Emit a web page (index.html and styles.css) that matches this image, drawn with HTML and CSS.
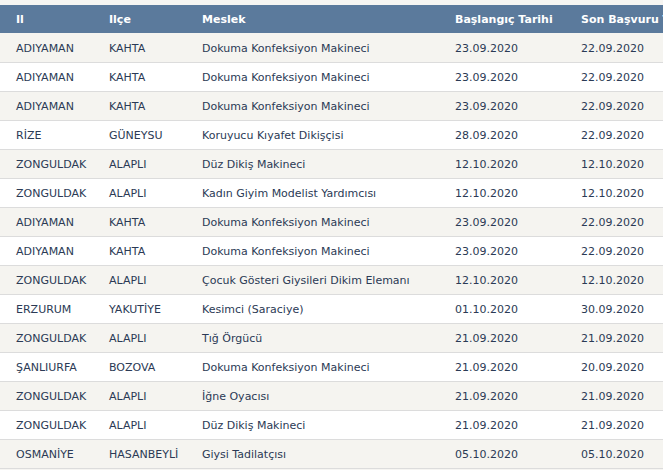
FILE: index.html
```html
<!DOCTYPE html>
<html lang="tr">
<head>
<meta charset="utf-8">
<link rel="stylesheet" href="styles.css">
</head>
<body>
<div class="wrap">
<table class="grid">
<colgroup>
<col class="c-il"><col class="c-ilce"><col class="c-meslek"><col class="c-bas"><col class="c-son">
</colgroup>
<thead>
<tr><th>Il</th><th>Ilçe</th><th>Meslek</th><th>Başlangıç Tarihi</th><th>Son Başvuru Tarihi</th></tr>
</thead>
<tbody>
<tr><td>ADIYAMAN</td><td>KAHTA</td><td>Dokuma Konfeksiyon Makineci</td><td>23.09.2020</td><td>22.09.2020</td></tr>
<tr><td>ADIYAMAN</td><td>KAHTA</td><td>Dokuma Konfeksiyon Makineci</td><td>23.09.2020</td><td>22.09.2020</td></tr>
<tr><td>ADIYAMAN</td><td>KAHTA</td><td>Dokuma Konfeksiyon Makineci</td><td>23.09.2020</td><td>22.09.2020</td></tr>
<tr><td>RİZE</td><td>GÜNEYSU</td><td>Koruyucu Kıyafet Dikişçisi</td><td>28.09.2020</td><td>22.09.2020</td></tr>
<tr><td>ZONGULDAK</td><td>ALAPLI</td><td>Düz Dikiş Makineci</td><td>12.10.2020</td><td>12.10.2020</td></tr>
<tr><td>ZONGULDAK</td><td>ALAPLI</td><td>Kadın Giyim Modelist Yardımcısı</td><td>12.10.2020</td><td>12.10.2020</td></tr>
<tr><td>ADIYAMAN</td><td>KAHTA</td><td>Dokuma Konfeksiyon Makineci</td><td>23.09.2020</td><td>22.09.2020</td></tr>
<tr><td>ADIYAMAN</td><td>KAHTA</td><td>Dokuma Konfeksiyon Makineci</td><td>23.09.2020</td><td>22.09.2020</td></tr>
<tr><td>ZONGULDAK</td><td>ALAPLI</td><td>Çocuk Gösteri Giysileri Dikim Elemanı</td><td>12.10.2020</td><td>12.10.2020</td></tr>
<tr><td>ERZURUM</td><td>YAKUTİYE</td><td>Kesimci (Saraciye)</td><td>01.10.2020</td><td>30.09.2020</td></tr>
<tr><td>ZONGULDAK</td><td>ALAPLI</td><td>Tığ Örgücü</td><td>21.09.2020</td><td>21.09.2020</td></tr>
<tr><td>ŞANLIURFA</td><td>BOZOVA</td><td>Dokuma Konfeksiyon Makineci</td><td>21.09.2020</td><td>20.09.2020</td></tr>
<tr><td>ZONGULDAK</td><td>ALAPLI</td><td>İğne Oyacısı</td><td>21.09.2020</td><td>21.09.2020</td></tr>
<tr><td>ZONGULDAK</td><td>ALAPLI</td><td>Düz Dikiş Makineci</td><td>21.09.2020</td><td>21.09.2020</td></tr>
<tr><td>OSMANİYE</td><td>HASANBEYLİ</td><td>Giysi Tadilatçısı</td><td>05.10.2020</td><td>05.10.2020</td></tr>
</tbody>
</table>
</div>
</body>
</html>
```
FILE: styles.css
```css
html, body {
  margin: 0;
  padding: 0;
  overflow: hidden;
  background: #f6f5f2;
}
.wrap {
  padding-top: 5px;
  width: 760px;
}
.grid {
  border-collapse: collapse;
  width: 760px;
  table-layout: fixed;
  font-family: "DejaVu Sans", Verdana, sans-serif;
  font-size: 11px;
  color: #2b3a55;
}
.c-il { width: 93px; }
.c-ilce { width: 93px; }
.c-meslek { width: 253px; }
.c-bas { width: 126px; }
.c-son { width: 195px; }
.grid th {
  background: #5b7a9c;
  color: #fff;
  font-weight: bold;
  font-size: 11px;
  text-align: left;
  height: 28px;
  padding: 0 0 0 16px;
  border-bottom: 1px solid #f5f4f0;
  white-space: nowrap;
}
.grid td {
  height: 28px;
  padding: 0 0 0 16px;
  border-bottom: 1px solid #dcdcdc;
  white-space: nowrap;
  background: #fff;
}
.grid tbody tr:nth-child(odd) td {
  background: #f5f4f0;
}
```
